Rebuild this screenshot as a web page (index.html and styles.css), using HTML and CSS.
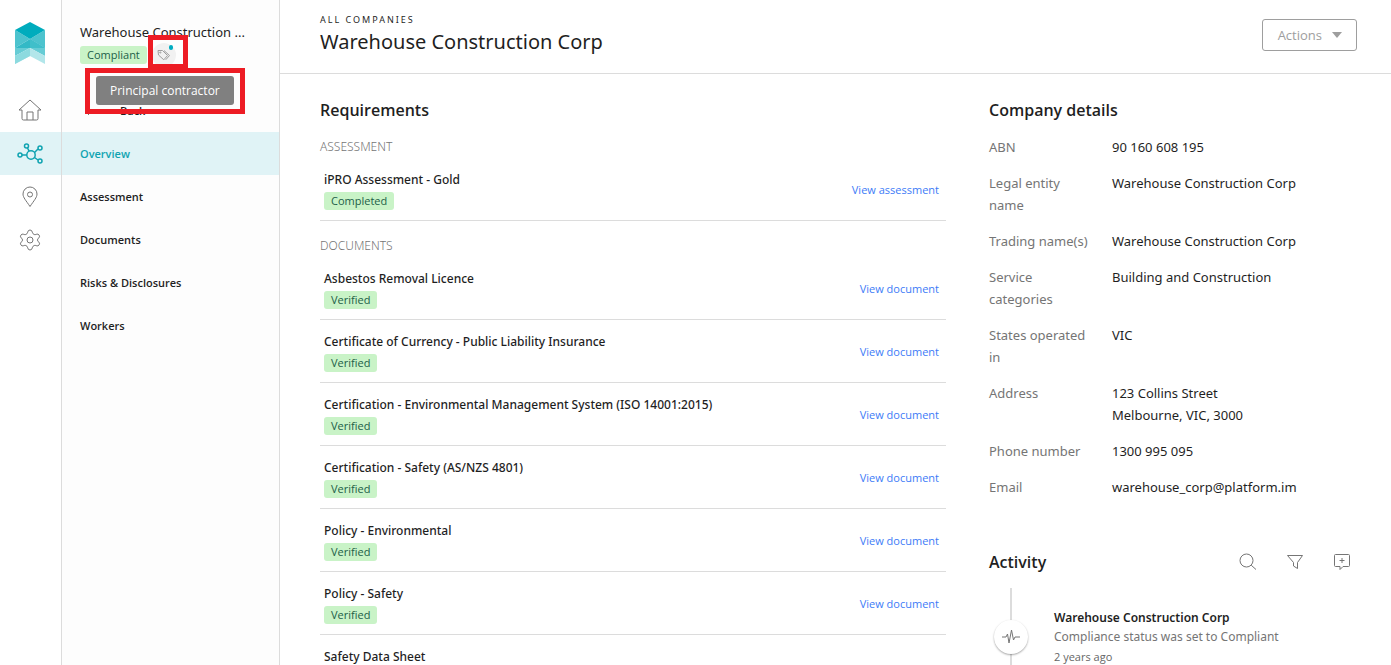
FILE: index.html
```html
<!DOCTYPE html>
<html lang="en">
<head>
    <meta charset="UTF-8">
    <meta name="viewport" content="width=device-width, initial-scale=1.0">
    <title>Warehouse Construction Corp</title>
    <link rel="stylesheet" href="styles.css">
</head>
<body>
    <div class="app">
        <nav class="rail" aria-label="Main">
            <a href="#" class="logo" aria-label="Home page">
                <svg width="30" height="43" viewBox="0 0 30 43">
                    <path d="M0 8 15 17 0 26z M30 8 15 17 30 26z" fill="#4dc3ce"/>
                    <path d="M15 0 30 8 15 17 0 8z" fill="#00acbd"/>
                    <path d="M15 17 30 26H0z" fill="#33b9c6"/>
                    <path d="M15 17 30 26 15 26z" fill="#40bfca"/>
                    <path d="M0 26H15L0 34z M30 26H15L30 34z" fill="#66ccd5"/>
                    <path d="M15 26 30 34V42L15 34 0 42V34z" fill="#b2e6ea"/>
                    <path d="M15 26 0 34V42L15 34z" fill="#8cdadf"/>
                </svg>
            </a>
            <a href="#" class="rail-item" aria-label="Home">
                <svg width="24" height="24" viewBox="0 0 24 24"><path d="M1 11 12 1l11 10h-3v8.500q0 1.500-1.500 1.500h-13Q4 21 4 19.500V11zM9 21v-8h6v8"/></svg>
            </a>
            <a href="#" class="rail-item active" aria-label="Network">
                <svg width="26" height="22" viewBox="0 0 26 22"><circle cx="14" cy="12" r="4.200"/><circle cx="9.500" cy="3" r="2"/><circle cx="23" cy="5" r="2"/><circle cx="3" cy="12" r="2"/><circle cx="23" cy="18" r="2"/><path d="M10.500 5l1.600 3.200M21 6l-3.500 3.500M5 12h4.800M21 17l-3.500-2.500"/></svg>
            </a>
            <a href="#" class="rail-item" aria-label="Sites">
                <svg width="24" height="24" viewBox="0 0 24 24"><path d="M12 21.500C8 15.500 5 12.500 5 9a7 7 0 0 1 14 0c0 3.500-3 6.500-7 12.500z"/><circle cx="12" cy="9.500" r="2.500"/></svg>
            </a>
            <a href="#" class="rail-item" aria-label="Settings">
                <svg width="24" height="24" viewBox="0 0 24 24"><path d="M9.700 4.200Q10 2 12 2t2.300 2.200q.2 1.600 1.900 2.300 1 .4 2-.2 2-.8 3 .9t-.7 3q-1 .8-1 1.800t1 1.800q1.700 1.300.7 3t-3 .9q-1-.6-2-.2-1.700.7-1.900 2.300-.3 2.200-2.300 2.200t-2.300-2.200Q9.500 18.200 7.800 17.500q-1-.4-2 .2-2 .8-3-.9t.7-3q1-.8 1-1.800t-1-1.800q-1.700-1.300-.7-3t3-.9q1 .6 2 .2 1.700-.7 1.900-2.300z"/><circle cx="12" cy="12" r="3"/></svg>
            </a>
        </nav>

        <aside class="sidebar">
            <div class="company">
                <div class="company-name">Warehouse Construction ...</div>
                <div class="company-tags">
                    <span class="tag">Compliant</span>
                    <span class="label-icon">
                        <svg width="14" height="12" viewBox="0 0 14 12"><path d="M1 1.500h4.500l5 5-3.700 4.300L1.500 6zM7 1.500l5.500 5-3.800 4.300"/><circle cx="3.300" cy="3.500" r=".6"/></svg>
                    </span>
                    <div class="callout callout-icon"></div>
                    <div class="callout callout-tip"><span class="tooltip" role="tooltip">Principal contractor</span></div>
                </div>
            </div>
            <a href="#" class="back">
                <svg width="6" height="10" viewBox="0 0 6 10"><path d="M5 1 1 5l4 4"/></svg>
                Back
            </a>
            <nav class="menu" aria-label="Company">
                <a href="#" class="active">Overview</a>
                <a href="#">Assessment</a>
                <a href="#">Documents</a>
                <a href="#">Risks &amp; Disclosures</a>
                <a href="#">Workers</a>
            </nav>
        </aside>

        <div class="page">
            <header class="page-header">
                <div>
                    <a href="#" class="crumb">ALL COMPANIES</a>
                    <h1>Warehouse Construction Corp</h1>
                </div>
                <button type="button" class="actions">Actions</button>
            </header>

            <main class="content">
                <section class="requirements">
                    <h2>Requirements</h2>
                    <h3>ASSESSMENT</h3>
                    <ul>
                        <li>
                            <div>
                                <p>iPRO Assessment - Gold</p>
                                <span class="tag">Completed</span>
                            </div>
                            <a href="#">View assessment</a>
                        </li>
                    </ul>
                    <h3>DOCUMENTS</h3>
                    <ul>
                        <li>
                            <div>
                                <p>Asbestos Removal Licence</p>
                                <span class="tag">Verified</span>
                            </div>
                            <a href="#">View document</a>
                        </li>
                        <li>
                            <div>
                                <p>Certificate of Currency - Public Liability Insurance</p>
                                <span class="tag">Verified</span>
                            </div>
                            <a href="#">View document</a>
                        </li>
                        <li>
                            <div>
                                <p>Certification - Environmental Management System (ISO 14001:2015)</p>
                                <span class="tag">Verified</span>
                            </div>
                            <a href="#">View document</a>
                        </li>
                        <li>
                            <div>
                                <p>Certification - Safety (AS/NZS 4801)</p>
                                <span class="tag">Verified</span>
                            </div>
                            <a href="#">View document</a>
                        </li>
                        <li>
                            <div>
                                <p>Policy - Environmental</p>
                                <span class="tag">Verified</span>
                            </div>
                            <a href="#">View document</a>
                        </li>
                        <li>
                            <div>
                                <p>Policy - Safety</p>
                                <span class="tag">Verified</span>
                            </div>
                            <a href="#">View document</a>
                        </li>
                        <li>
                            <div>
                                <p>Safety Data Sheet</p>
                                <span class="tag">Verified</span>
                            </div>
                        </li>
                    </ul>
                </section>

                <div class="info">
                    <section>
                        <h2>Company details</h2>
                        <dl class="details">
                            <dt>ABN</dt>
                            <dd>90 160 608 195</dd>
                            <dt>Legal entity name</dt>
                            <dd>Warehouse Construction Corp</dd>
                            <dt>Trading name(s)</dt>
                            <dd>Warehouse Construction Corp</dd>
                            <dt>Service categories</dt>
                            <dd>Building and Construction</dd>
                            <dt>States operated in</dt>
                            <dd>VIC</dd>
                            <dt>Address</dt>
                            <dd>123 Collins Street<br>Melbourne, VIC, 3000</dd>
                            <dt>Phone number</dt>
                            <dd>1300 995 095</dd>
                            <dt>Email</dt>
                            <dd>warehouse_corp@platform.im</dd>
                        </dl>
                    </section>

                    <section class="activity">
                        <div class="activity-header">
                            <h2>Activity</h2>
                            <div class="activity-tools">
                                <button type="button" aria-label="Search">
                                    <svg width="18" height="18" viewBox="0 0 18 18"><circle cx="7.500" cy="7.500" r="6.500"/><path d="M12.200 12.200 17 16.500"/></svg>
                                </button>
                                <button type="button" aria-label="Filter">
                                    <svg width="18" height="18" viewBox="0 0 18 18"><path d="M1.500 2.500h15l-5 7v6L7.500 13V9.500z"/></svg>
                                </button>
                                <button type="button" aria-label="Add comment">
                                    <svg width="18" height="18" viewBox="0 0 18 18"><path d="M2.500 1.500h13q1 0 1 1v10q0 1-1 1H10l-3 3v-3H2.500q-1 0-1-1v-10q0-1 1-1zM9 5v5M6.500 7.500h5"/></svg>
                                </button>
                            </div>
                        </div>
                        <div class="timeline">
                            <div class="event">
                                <span class="event-icon">
                                    <svg width="18" height="16" viewBox="0 0 18 16"><path d="M0 8h4l1.500-3L7 14 9.500 1l2 10 1.500-3h5"/></svg>
                                </span>
                                <div>
                                    <p class="event-title">Warehouse Construction Corp</p>
                                    <p class="event-text">Compliance status was set to Compliant</p>
                                    <p class="event-time">2 years ago</p>
                                </div>
                            </div>
                        </div>
                    </section>
                </div>
            </main>
        </div>
    </div>
</body>
</html>
```

FILE: styles.css
```css
* {
    box-sizing: border-box;
}

body {
    margin: 0;
    font-family: "Noto Sans", "Open Sans", sans-serif;
    font-size: 13px;
    color: #1f1f1f;
    background: #fff;
}

h1, h2, h3, p, ul, dl, dd {
    margin: 0;
    padding: 0;
}

a {
    text-decoration: none;
    color: inherit;
}

svg {
    display: block;
    fill: none;
    stroke: #757575;
    stroke-width: 1;
}

.app {
    display: flex;
    height: 100vh;
    overflow: hidden;
}

/* icon rail */
.rail {
    width: 62px;
    flex-shrink: 0;
    border-right: 1px solid #dcdcdc;
}

.logo {
    display: flex;
    justify-content: center;
    height: 89px;
    padding: 22px 2px 0 0;
}

.logo svg {
    stroke: none;
}

.rail-item {
    display: flex;
    align-items: center;
    justify-content: center;
    height: 43px;
    padding-right: 2px;
}

.rail-item.active,
.menu a.active {
    background: #e0f3f6;
    color: #0fa3b1;
}

.rail-item.active svg {
    stroke: #0fa3b1;
    stroke-width: 1.5;
}

/* company menu */
.sidebar {
    width: 218px;
    flex-shrink: 0;
    border-right: 1px solid #dcdcdc;
    background: #fdfdfd;
}

.company {
    height: 89px;
    padding: 21px 18px 0;
}

.company-name {
    font-size: 13px;
    line-height: 22px;
    white-space: nowrap;
}

.company-tags {
    position: relative;
    display: flex;
    align-items: center;
    gap: 5px;
    height: 24px;
}

.tag {
    display: inline-block;
    padding: 0 7px;
    border-radius: 3px;
    background: #c9f3c7;
    color: #1c6048;
    font-family: "Open Sans", sans-serif;
    font-size: 11px;
    font-weight: 500;
    line-height: 18px;
}

.label-icon {
    position: relative;
    display: flex;
    align-items: center;
    justify-content: center;
    width: 24px;
    height: 24px;
    border-radius: 50%;
    background: #f1f1f1;
}

.label-icon svg {
    stroke: #9e9e9e;
}

.label-icon::after {
    content: "";
    position: absolute;
    top: 2px;
    right: 3px;
    width: 4px;
    height: 5px;
    border-radius: 2px;
    background: #00acc1;
}

.callout {
    position: absolute;
    border: 5px solid #ed1c24;
}

.callout-icon {
    top: -8px;
    left: 68px;
    width: 40px;
    height: 34px;
}

.callout-tip {
    top: 25px;
    left: 5px;
    padding: 3px 6px 4px;
}

.tooltip {
    display: block;
    padding: 0 14px;
    border-radius: 3px;
    background: #808080;
    color: #fff;
    font-family: "Open Sans", sans-serif;
    font-size: 12px;
    line-height: 29px;
    white-space: nowrap;
}

.back {
    display: flex;
    align-items: center;
    gap: 30px;
    height: 43px;
    padding-left: 22px;
    font-family: "Open Sans", sans-serif;
    font-size: 11px;
    font-weight: 600;
}

.menu a {
    display: block;
    padding-left: 18px;
    font-family: "Open Sans", sans-serif;
    font-size: 11px;
    font-weight: 600;
    line-height: 43px;
}

/* page */
.page {
    flex: 1;
    min-width: 0;
}

.page-header {
    display: flex;
    justify-content: space-between;
    align-items: flex-start;
    height: 74px;
    padding: 12px 34px 0 40px;
    border-bottom: 1px solid #dcdcdc;
}

.crumb {
    display: block;
    font-size: 9px;
    line-height: 16px;
    letter-spacing: 2px;
}

h1 {
    font-size: 20px;
    font-weight: 400;
    line-height: 28px;
}

.actions {
    display: flex;
    align-items: center;
    gap: 10px;
    height: 32px;
    margin-top: 7px;
    padding: 0 14px 0 15px;
    border: 1px solid #9e9e9e;
    border-radius: 3px;
    background: #fff;
    color: #9e9e9e;
    font: 500 13px "Open Sans", sans-serif;
}

.actions::after {
    content: "";
    border: 5px solid transparent;
    border-top: 6px solid #9e9e9e;
    border-bottom: 0;
}

.content {
    display: grid;
    grid-template-columns: 1fr 362px;
    gap: 43px;
    padding: 24px 40px 0;
}

h2 {
    font-family: "Open Sans", sans-serif;
    font-size: 16px;
    font-weight: 600;
    line-height: 24px;
}

.requirements h2,
.info h2 {
    margin-bottom: 14px;
}

h3 {
    color: #757575;
    font-size: 12px;
    font-weight: 300;
    line-height: 22px;
}

.requirements ul {
    list-style: none;
    margin-bottom: 14px;
}

.requirements li {
    display: flex;
    justify-content: space-between;
    align-items: center;
    height: 63px;
    padding: 0 7px 0 4px;
    border-bottom: 1px solid #dcdcdc;
}

.requirements li p {
    font-size: 12px;
    font-weight: 500;
    line-height: 22px;
}

.requirements li a {
    color: #3d7bf7;
    font-family: "Open Sans", sans-serif;
    font-size: 11px;
}

.details {
    display: grid;
    grid-template-columns: 105px 1fr;
    gap: 14px 18px;
    line-height: 22px;
}

.details dt {
    color: #757575;
}

.activity {
    margin-top: 52px;
}

.activity-header {
    display: flex;
    justify-content: space-between;
}

.activity-tools {
    display: flex;
    gap: 29px;
    height: 24px;
}

.activity-tools button {
    padding: 0;
    border: 0;
    background: none;
}

.timeline {
    padding-left: 21px;
}

.event {
    display: flex;
    gap: 26px;
    height: 110px;
    padding-top: 20px;
    border-left: 2px solid #dcdcdc;
}

.event-icon {
    display: flex;
    align-items: center;
    justify-content: center;
    width: 34px;
    height: 34px;
    margin: 12px 0 0 -18px;
    border-radius: 50%;
    background: #fff;
    box-shadow: 0 1px 2px rgba(0, 0, 0, 0.35);
}

.event-title {
    font-size: 12px;
    font-weight: 600;
    line-height: 20px;
}

.event-text {
    color: #757575;
    font-size: 12px;
    line-height: 18px;
}

.event-time {
    color: #666;
    font-family: "Open Sans", sans-serif;
    font-size: 11px;
    line-height: 22px;
}
```
